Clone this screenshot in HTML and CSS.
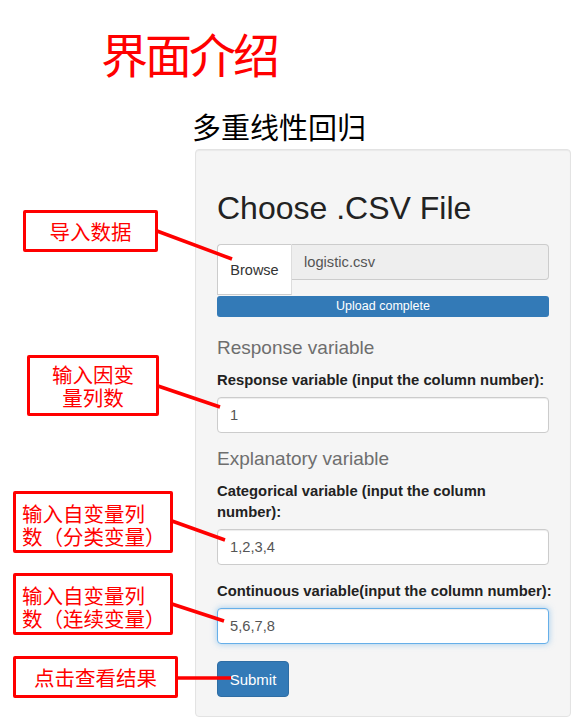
FILE: index.html
```html
<!DOCTYPE html>
<html lang="zh">
<head>
<meta charset="utf-8">
<title>界面介绍</title>
<link rel="stylesheet" href="styles.css">
</head>
<body>
<h1 class="page-title">界面介绍</h1>
<h2 class="app-title">多重线性回归</h2>
<div class="stage">
  <div class="well">
    <h2 class="file-heading">Choose .CSV File</h2>
    <div class="file-row">
      <span class="btn-browse">Browse</span>
      <input class="file-name" type="text" value="logistic.csv" readonly>
    </div>
    <div class="progress">Upload complete</div>

    <h4 class="section">Response variable</h4>
    <label class="field-label">Response variable (input the column number):</label>
    <input class="form-control" type="text" value="1">

    <h4 class="section second">Explanatory variable</h4>
    <label class="field-label">Categorical variable (input the column number):</label>
    <input class="form-control" type="text" value="1,2,3,4">

    <label class="field-label spaced">Continuous variable(input the column number):</label>
    <input class="form-control focused" type="text" value="5,6,7,8">

    <button class="btn-submit" type="button">Submit</button>
  </div>

  <div class="note note-1">导入数据</div>
  <div class="note note-2 centered">输入因变<br>量列数</div>
  <div class="note note-3">输入自变量列<br>数（分类变量）</div>
  <div class="note note-4">输入自变量列<br>数（连续变量）</div>
  <div class="note note-5">点击查看结果</div>

  <svg class="arrows" width="578" height="576" viewBox="0 0 578 576">
    <g stroke="#ff0000" stroke-width="3.5" stroke-linecap="butt">
      <line x1="157" y1="82" x2="232" y2="110"/>
      <line x1="158" y1="237" x2="220" y2="258"/>
      <line x1="172" y1="372" x2="225" y2="391"/>
      <line x1="172" y1="455" x2="224" y2="472"/>
      <line x1="177" y1="529" x2="231" y2="529"/>
    </g>
  </svg>
</div>
</body>
</html>
```
FILE: styles.css
```css
* { box-sizing: border-box; }
html, body { margin: 0; padding: 0; background: #ffffff; }
body {
  width: 578px;
  font-family: "Liberation Sans", Arial, sans-serif;
  color: #222;
}
.page-title {
  margin: 24px 0 0 101px;
  font-family: "Noto Sans CJK SC", sans-serif;
  font-weight: 400;
  font-size: 47px;
  line-height: 58px;
  letter-spacing: -3px;
  color: #ff0000;
}
.app-title {
  margin: 27px 0 0 192px;
  font-family: "Noto Sans CJK SC", sans-serif;
  font-weight: 400;
  font-size: 29px;
  line-height: 34px;
  color: #000;
}
.stage {
  position: relative;
  margin-top: 6px;
  width: 578px;
}
.well {
  margin-left: 195px;
  width: 376px;
  padding: 0 21px 19px;
  background: #f5f5f5;
  border: 1px solid #e3e3e3;
  border-radius: 4px;
  box-shadow: inset 0 1px 1px rgba(0,0,0,.05);
  display: flex;
  flex-direction: column;
  align-items: flex-start;
}
.file-heading {
  margin: 41px 0 0;
  font-size: 32px;
  font-weight: 400;
  line-height: 35px;
  color: #222;
}
.file-row {
  margin-top: 18px;
  display: flex;
  align-items: flex-start;
  width: 100%;
  height: 51px;
}
.btn-browse {
  width: 75px;
  height: 51px;
  display: flex;
  align-items: center;
  justify-content: center;
  background: #fff;
  border: 1px solid #ccc;
  border-right: 1px solid #ddd;
  border-radius: 4px 0 0 0;
  font-size: 14.5px;
  color: #333;
}
.file-name {
  flex: 1;
  height: 36px;
  margin: 0;
  padding: 0 12px;
  background: #eeeeee;
  border: 1px solid #ccc;
  border-left: none;
  border-radius: 0 4px 4px 0;
  font-family: "Liberation Sans", Arial, sans-serif;
  font-size: 14.7px;
  color: #555;
  outline: none;
}
.progress {
  margin-top: 1px;
  width: 100%;
  height: 21px;
  line-height: 21px;
  background: #337ab7;
  border-radius: 3px;
  color: #fff;
  text-align: center;
  font-size: 12.5px;
}
.section {
  margin: 20px 0 0;
  font-size: 19px;
  font-weight: 400;
  line-height: 22px;
  color: #6e6e6e;
}
.section.second { margin-top: 15px; }
.field-label {
  display: block;
  margin-top: 10.5px;
  font-weight: 700;
  font-size: 14.8px;
  line-height: 21px;
  color: #222;
}
.field-label.spaced { margin-top: 15.5px; white-space: nowrap; }
.form-control {
  display: block;
  margin-top: 6.5px;
  width: 100%;
  height: 36px;
  padding: 0 12px;
  background: #fff;
  border: 1px solid #ccc;
  border-radius: 4px;
  box-shadow: inset 0 1px 1px rgba(0,0,0,.075);
  font-family: "Liberation Sans", Arial, sans-serif;
  font-size: 14.7px;
  color: #555;
  outline: none;
}
.form-control.focused {
  border-color: #66afe9;
  box-shadow: inset 0 1px 1px rgba(0,0,0,.075), 0 0 6px rgba(102,175,233,.6);
}
.btn-submit {
  margin-top: 17px;
  width: 72px;
  height: 36px;
  padding: 0;
  background: #337ab7;
  border: 1px solid #2e6da4;
  border-radius: 4px;
  color: #fff;
  font-family: "Liberation Sans", Arial, sans-serif;
  font-size: 15px;
}
.note {
  position: absolute;
  display: flex;
  flex-direction: column;
  justify-content: center;
  padding: 0 0 0 5px;
  background: #fff;
  border: 3px solid #ff0000;
  border-radius: 2px;
  font-family: "Noto Sans CJK SC", sans-serif;
  font-size: 20.5px;
  line-height: 23px;
  color: #ff0000;
  z-index: 2;
}
.note.centered { align-items: center; text-align: center; padding: 0; }
.note-1 { left: 23px; top: 61px; width: 135px; height: 42px; padding: 0; align-items: center; }
.note-2 { left: 27px; top: 206px; width: 132px; height: 61px; padding-top: 2px; }
.note-3 { left: 13px; top: 342px; width: 160px; height: 62px; padding-top: 5px; padding-left: 6px; }
.note-4 { left: 13px; top: 424px; width: 160px; height: 62px; padding-top: 5px; padding-left: 6px; }
.note-5 { left: 13px; top: 507px; width: 165px; height: 42px; padding: 0; align-items: center; }
.arrows {
  position: absolute;
  left: 0;
  top: 0;
  pointer-events: none;
  z-index: 3;
}
```
